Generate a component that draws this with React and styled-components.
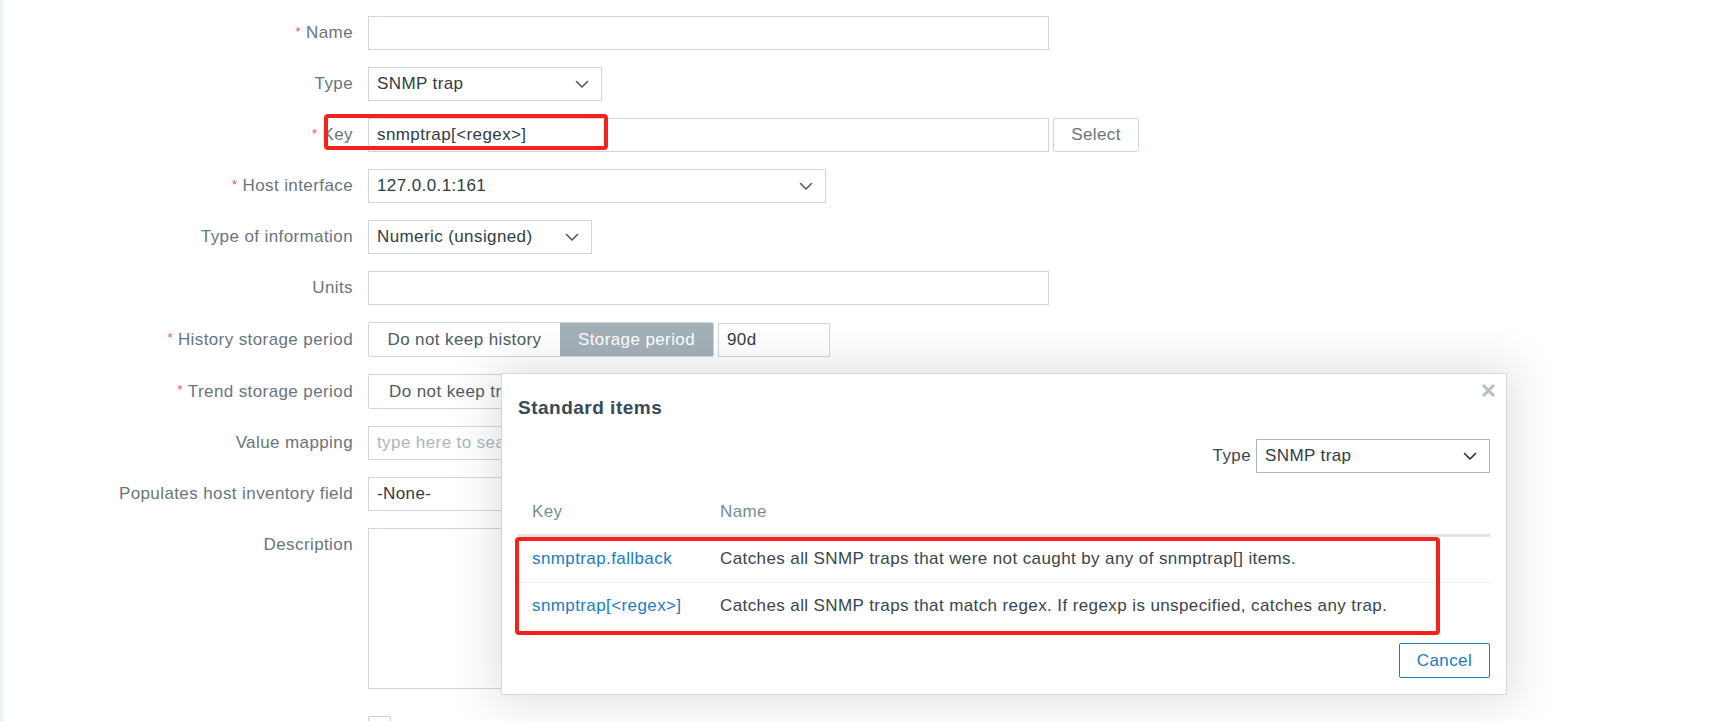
import React from 'react'
import styled, { createGlobalStyle } from 'styled-components'

const GlobalStyle = createGlobalStyle`
    html, body {
        margin: 0;
        padding: 0;
        background: #ffffff;
    }
    body {
        font-family: "Liberation Sans", Arial, sans-serif;
        font-size: 17px;
        letter-spacing: 0.4px;
        color: #1f2c33;
    }
    * {
        box-sizing: border-box;
    }
`

const Chevron = ({ color = '#4f5b62' }) => (
    <svg width="14" height="9" viewBox="0 0 14 9" fill="none">
        <path d="M1.5 1.5 L7 7 L12.5 1.5" stroke={color} strokeWidth="1.6" strokeLinecap="round" strokeLinejoin="round" />
    </svg>
)

const App = () => {
    return (
        <Page>
            <GlobalStyle />
            <Form>
                <Label required>Name</Label>
                <Field><Input width={681} /></Field>

                <Label>Type</Label>
                <Field><Select width={234}><span>SNMP trap</span><Chevron /></Select></Field>

                <Label required>Key</Label>
                <Field>
                    <Input width={681}>snmptrap[&lt;regex&gt;]</Input>
                    <Button>Select</Button>
                </Field>

                <Label required>Host interface</Label>
                <Field><Select width={458}><span>127.0.0.1:161</span><Chevron /></Select></Field>

                <Label>Type of information</Label>
                <Field><Select width={224}><span>Numeric (unsigned)</span><Chevron /></Select></Field>

                <Label>Units</Label>
                <Field><Input width={681} /></Field>

                <Label required>History storage period</Label>
                <Field>
                    <Radio>
                        <RadioOption width={191}>Do not keep history</RadioOption>
                        <RadioOption width={153} active>Storage period</RadioOption>
                    </Radio>
                    <Input width={112}>90d</Input>
                </Field>

                <Label required>Trend storage period</Label>
                <Field>
                    <Radio>
                        <RadioOption width={191}>Do not keep trends</RadioOption>
                        <RadioOption width={153} active>Storage period</RadioOption>
                    </Radio>
                    <Input width={112}>365d</Input>
                </Field>

                <Label>Value mapping</Label>
                <Field><Input width={681} placeholder>type here to search</Input></Field>

                <Label>Populates host inventory field</Label>
                <Field><Select width={458}><span>-None-</span><Chevron /></Select></Field>

                <Label top>Description</Label>
                <Field><TextArea /></Field>

                <Label />
                <Field><Checkbox /></Field>
            </Form>

            <Modal>
                <Close>
                    <svg width="13" height="13" viewBox="0 0 13 13">
                        <path d="M2 2 L11 11 M11 2 L2 11" stroke="#b4bec4" strokeWidth="3" strokeLinecap="square" />
                    </svg>
                </Close>
                <Title>Standard items</Title>
                <Filter>
                    <FilterLabel>Type</FilterLabel>
                    <Select width={234} dark><span>SNMP trap</span><Chevron color="#1f2c33" /></Select>
                </Filter>
                <Table>
                    <thead>
                        <tr>
                            <Th width={188}>Key</Th>
                            <Th>Name</Th>
                        </tr>
                    </thead>
                    <tbody>
                        <Tr>
                            <Td><Link>snmptrap.fallback</Link></Td>
                            <Td>Catches all SNMP traps that were not caught by any of snmptrap[] items.</Td>
                        </Tr>
                        <Tr last>
                            <Td><Link>snmptrap[&lt;regex&gt;]</Link></Td>
                            <Td>Catches all SNMP traps that match regex. If regexp is unspecified, catches any trap.</Td>
                        </Tr>
                    </tbody>
                </Table>
                <Footer>
                    <CancelButton>Cancel</CancelButton>
                </Footer>
            </Modal>

            <Mark left={321} top={114} width={284} height={36} />
            <Mark left={512} top={537} width={925} height={98} />
        </Page>
    )
}

export default App

const Page = styled.div`
    position: relative;
    width: 1731px;
    height: 721px;
    overflow: hidden;
    border-left: 3px solid #eef1f3;
`
const Form = styled.div`
    display: grid;
    grid-template-columns: 350px 1fr;
    column-gap: 15px;
    row-gap: 17px;
    padding-top: 16px;
`
const Label = styled.div`
    display: flex;
    justify-content: flex-end;
    align-items: ${p => (p.top ? 'flex-start' : 'center')};
    padding-top: ${p => (p.top ? '7px' : '0')};
    color: #69757c;
    white-space: nowrap;
    &::before {
        content: ${p => (p.required ? "'*'" : 'none')};
        color: #e45959;
        font-size: 13px;
        margin-right: 5px;
        align-self: flex-start;
        margin-top: ${p => (p.top ? '0' : '8px')};
    }
`
const Field = styled.div`
    display: flex;
    align-items: center;
    gap: 4px;
    min-height: 34px;
`
const Input = styled.div`
    width: ${p => p.width}px;
    height: 34px;
    border: 1px solid #cfd6da;
    background: #fff;
    padding: 0 8px;
    display: flex;
    align-items: center;
    color: ${p => (p.placeholder ? '#acb6bc' : '#313c43')};
    white-space: nowrap;
    overflow: hidden;
`
const Select = styled.div`
    width: ${p => p.width}px;
    height: 34px;
    border: 1px solid ${p => (p.dark ? '#aab6bd' : '#cfd6da')};
    background: #fff;
    padding: 0 12px 0 8px;
    display: flex;
    align-items: center;
    justify-content: space-between;
    color: #313c43;
    white-space: nowrap;
`
const Button = styled.div`
    width: 86px;
    height: 34px;
    border: 1px solid #cfd6da;
    border-radius: 2px;
    display: flex;
    align-items: center;
    justify-content: center;
    color: #69757c;
`
const Radio = styled.div`
    display: flex;
    height: 35px;
    border: 1px solid #cfd6da;
    border-radius: 2px;
    overflow: hidden;
`
const RadioOption = styled.div`
    width: ${p => p.width}px;
    display: flex;
    align-items: center;
    justify-content: center;
    white-space: nowrap;
    background: ${p => (p.active ? '#a4b0b8' : '#fff')};
    color: ${p => (p.active ? '#fff' : '#4f5b62')};
`
const TextArea = styled.div`
    width: 681px;
    height: 161px;
    border: 1px solid #cfd6da;
`
const Checkbox = styled.div`
    width: 23px;
    height: 23px;
    margin-top: 8px;
    border: 1px solid #c5ced3;
    border-radius: 2px;
`
const Modal = styled.div`
    position: absolute;
    left: 498px;
    top: 373px;
    width: 1006px;
    height: 322px;
    background: #fff;
    border: 1px solid #d3dade;
    box-shadow: 0 0 40px 8px rgba(60, 75, 85, 0.16);
    padding: 24px 16px 16px 16px;
    display: flex;
    flex-direction: column;
`
const Close = styled.div`
    position: absolute;
    top: 10px;
    right: 11px;
    display: flex;
`
const Title = styled.div`
    font-size: 19px;
    font-weight: bold;
    line-height: 20px;
    letter-spacing: 0.5px;
    color: #374a55;
`
const Filter = styled.div`
    display: flex;
    justify-content: flex-end;
    align-items: center;
    gap: 5px;
    margin-top: 21px;
    color: #313c43;
`
const FilterLabel = styled.span`
    color: #3d484e;
`
const Table = styled.table`
    margin-top: 18px;
    width: 100%;
    border-collapse: collapse;
`
const Th = styled.th`
    width: ${p => (p.width ? `${p.width}px` : 'auto')};
    height: 44px;
    padding: 0 14px;
    text-align: left;
    font-weight: normal;
    color: #768d99;
    border-bottom: 3px solid #dfe4e7;
`
const Tr = styled.tr`
    border-bottom: 1px solid ${p => (p.last ? 'transparent' : '#ebeef0')};
`
const Td = styled.td`
    height: 47px;
    padding: 0 14px;
    color: #3a454b;
    white-space: nowrap;
`
const Link = styled.span`
    color: #1a7cc2;
`
const Footer = styled.div`
    display: flex;
    justify-content: flex-end;
    margin-top: auto;
`
const CancelButton = styled.div`
    width: 91px;
    height: 35px;
    border: 1px solid #1a7cc2;
    border-radius: 2px;
    color: #1a7cc2;
    display: flex;
    align-items: center;
    justify-content: center;
`
const Mark = styled.div`
    position: absolute;
    left: ${p => p.left}px;
    top: ${p => p.top}px;
    width: ${p => p.width}px;
    height: ${p => p.height}px;
    border: 4px solid #f5221b;
    border-radius: 4px;
    pointer-events: none;
`
